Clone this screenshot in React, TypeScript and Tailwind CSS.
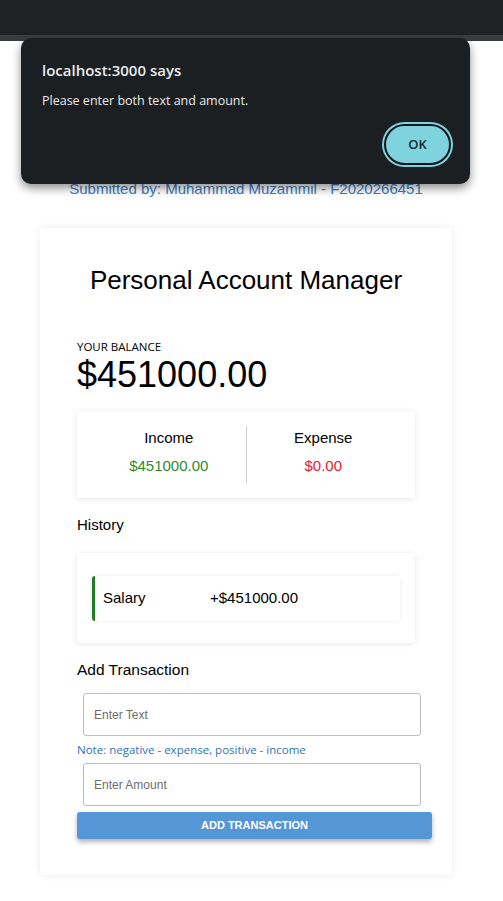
import React from 'react';

const arial = "font-['Liberation_Sans',Arial,sans-serif]";
const ui = "font-['Open_Sans','Noto_Sans',sans-serif]";

function AlertDialog() {
  return (
    <div className={`absolute left-[21px] top-[38px] w-[449px] h-[146px] rounded-[10px] bg-[#1b1f22] shadow-[0_4px_10px_rgba(0,0,0,0.45)] ${ui}`}>
      <div className="pl-[21px] pt-[22px]">
        <div className="text-[15px] font-semibold text-[#e8eaed] leading-[20px]">localhost:3000 says</div>
        <div className="mt-[12px] text-[12.5px] text-[#e8eaed] leading-[18px]">Please enter both text and amount.</div>
      </div>
      <div className="absolute right-[17px] bottom-[17px] w-[71px] h-[45px] rounded-full bg-[#7fd3df] p-[2px]">
        <div className="w-full h-full rounded-full border-[2px] border-[#10181b] bg-[#7fd3df] flex items-center justify-center text-[13px] font-semibold text-[#0f2a30]">
          OK
        </div>
      </div>
    </div>
  );
}

export default function App() {
  return (
    <div className={`relative min-h-[901px] bg-white ${arial}`}>
      {/* browser top strip */}
      <div className="h-[35px] bg-[#202124]" />
      <div className="h-[6px] bg-[#3a3b3e]" />

      <div className="w-[492px] flex flex-col items-center">
        <div className="mt-[139px] text-[15px] leading-[18px] text-[#3b7dc2]">
          Submitted by: Muhammad Muzammil - F2020266451
        </div>

        <div className="mt-[30px] w-[412px] bg-white rounded-[3px] shadow-[0_0_8px_rgba(0,0,0,0.08)] px-[37px] pt-[36px] pb-[36px]">
          <h1 className="text-center text-[26px] leading-[32px] text-black">Personal Account Manager</h1>

          <div className={`mt-[43px] text-[11.5px] leading-[16px] text-black ${ui}`}>YOUR BALANCE</div>
          <div className="text-[36px] leading-[40px] text-black">$451000.00</div>

          <div className="mt-[16px] h-[87px] bg-white rounded-[3px] shadow-[0_1px_6px_rgba(0,0,0,0.1)] flex items-center px-[15px]">
            <div className="flex-1 self-start pt-[18px] flex flex-col items-center">
              <div className="text-[15px] leading-[18px] text-black">Income</div>
              <div className="mt-[10px] text-[15px] leading-[18px] text-[#2e8b2e]">$451000.00</div>
            </div>
            <div className="w-px h-[57px] bg-[#d0d0d0]" />
            <div className="flex-1 self-start pt-[18px] flex flex-col items-center">
              <div className="text-[15px] leading-[18px] text-black">Expense</div>
              <div className="mt-[10px] text-[15px] leading-[18px] text-[#e6202e]">$0.00</div>
            </div>
          </div>

          <div className="mt-[17px] text-[15px] leading-[20px] text-black">History</div>

          <div className="mt-[18px] h-[90px] bg-white rounded-[3px] shadow-[0_1px_6px_rgba(0,0,0,0.1)] pl-[15px] pr-[15px] pt-[23px]">
            <div className="h-[45px] flex items-center border-l-[3px] border-[#237b1f] rounded-[3px] shadow-[0_0_4px_rgba(0,0,0,0.08)] pl-[8px] text-[15px] text-black">
              <span className="w-[107px]">Salary</span>
              <span>+$451000.00</span>
            </div>
          </div>

          <div className="mt-[17px] text-[15.5px] leading-[20px] text-black">Add Transaction</div>

          <div className="mt-[13px] ml-[6px] w-[338px] h-[43px] border border-[#bdbdbd] rounded-[3px] flex items-center pl-[10px] text-[12px] text-[#6d6d6d]">
            Enter Text
          </div>
          <div className={`mt-[6px] text-[11.5px] leading-[16px] text-[#2f72b8] ${ui}`}>Note: negative - expense, positive - income</div>
          <div className="mt-[5px] ml-[6px] w-[338px] h-[43px] border border-[#bdbdbd] rounded-[3px] flex items-center pl-[10px] text-[12px] text-[#6d6d6d]">
            Enter Amount
          </div>
          <button className="mt-[6px] w-[355px] h-[27px] bg-[#5596d6] rounded-[3px] shadow-[0_3px_5px_rgba(0,0,0,0.3)] text-white text-[11px] font-bold">
            ADD TRANSACTION
          </button>
        </div>
      </div>

      <AlertDialog />
    </div>
  );
}
